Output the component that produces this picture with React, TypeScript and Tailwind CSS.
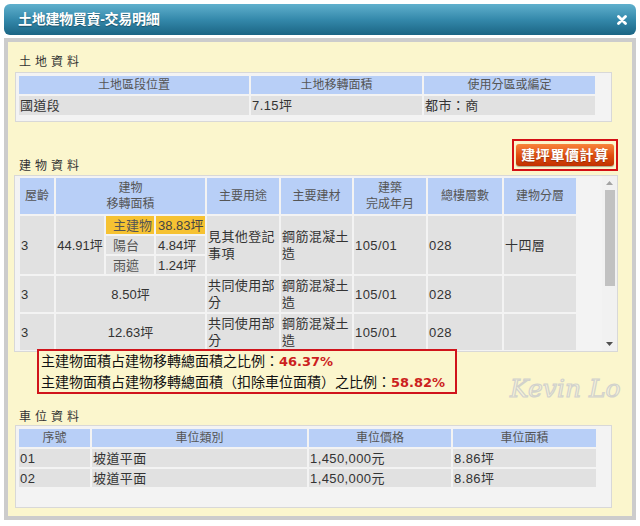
import React from 'react';

const headCell = 'bg-[#b8cff7] text-[#555] text-[12px] font-normal text-center align-middle p-0 leading-[16px]';
const cellBase = 'bg-[#e1e1e1] text-[#333] text-[13px] align-middle p-0 leading-[17px]';
const dataCell = `${cellBase} text-left pl-[1px] tracking-[0.4px]`;
const numCell = `${cellBase} text-center whitespace-nowrap`;
const subCell = 'text-[13px] text-left align-middle p-0 leading-[17px] whitespace-nowrap';

function SectionLabel({ text }: { text: string }) {
  return <div className="pl-[5px] h-[16px] leading-[16px] text-[12px] tracking-[4px] text-[#333]">{text}</div>;
}

function BuildingRow({ area }: { area: string }) {
  return (
    <tr className="h-[36px]">
      <td className={dataCell}>3</td>
      <td colSpan={3} className={numCell}>{area}</td>
      <td className={dataCell}>共同使用部分</td>
      <td className={dataCell}>鋼筋混凝土造</td>
      <td className={dataCell}>105/01</td>
      <td className={dataCell}>028</td>
      <td className={dataCell}></td>
    </tr>
  );
}

export default function App(): JSX.Element {
  return (
    <div className="w-[640px] h-[526px] overflow-hidden bg-white pt-[4px] px-[4px] font-['Liberation_Sans','Noto_Sans_CJK_TC',sans-serif]">
      {/* title bar */}
      <div className="h-[31px] rounded-[6px] bg-gradient-to-b from-[#5fb0cd] via-[#3489ab] to-[#1b6584] flex items-center justify-between pl-[14px] pr-[9px]">
        <span className="text-[14px] font-bold text-white tracking-[-0.3px] [text-shadow:0_1px_1px_rgba(0,0,0,0.35)]">
          土地建物買賣-交易明細
        </span>
        <svg width="10" height="10" viewBox="0 0 10 10">
          <path d="M1.5 1.5 L8.5 8.5 M8.5 1.5 L1.5 8.5" stroke="#fff" strokeWidth="2.8" strokeLinecap="round" />
        </svg>
      </div>

      {/* body frame */}
      <div className="relative mt-[3px] h-[482px] border-[4px] border-[#cccccc] bg-[#fbf6cd] pl-[6px] pr-[10px] pt-[12px]">
        <div className="absolute left-[502px] top-[332px] whitespace-nowrap text-[25px] leading-[30px] italic font-['DejaVu_Serif',serif] text-[#f6f2dc] [-webkit-text-stroke:1.2px_#d2d2cc]">
          Kevin Lo
        </div>

        <SectionLabel text="土地資料" />
        <div className="ml-[1px] mt-[2px] w-[597px] h-[50px] border border-[#d8d8d8] bg-[#f3f3f3] p-[1px]">
          <table className="table-fixed border-separate border-spacing-[2px] w-[579px]">
            <colgroup>
              <col className="w-[230px]" />
              <col className="w-[171px]" />
              <col className="w-[171px]" />
            </colgroup>
            <thead>
              <tr className="h-[18px]">
                <th className={headCell}>土地區段位置</th>
                <th className={headCell}>土地移轉面積</th>
                <th className={headCell}>使用分區或編定</th>
              </tr>
            </thead>
            <tbody>
              <tr className="h-[19px]">
                <td className={dataCell}>國道段</td>
                <td className={dataCell}>7.15坪</td>
                <td className={dataCell}>都市：商</td>
              </tr>
            </tbody>
          </table>
        </div>

        <div className="mt-[19px] h-[30px] flex items-end justify-between">
          <div className="-mb-[3px]">
            <SectionLabel text="建物資料" />
          </div>
          <div className="mr-[4px] border-2 border-[#d40f14] p-[2px]">
            <button className="w-[98px] h-[22px] rounded-[3px] bg-gradient-to-b from-[#f8843a] via-[#e24f10] to-[#c23000] text-white font-bold text-[14px] leading-[22px] tracking-[0.6px] shadow-[0_1px_1px_rgba(0,0,0,0.3)] [text-shadow:0_1px_1px_rgba(0,0,0,0.3)]">
              建坪單價計算
            </button>
          </div>
        </div>

        {/* building table with scrollbar */}
        <div className="mt-[4px] w-[604px] h-[177px] border border-[#d8d8d8] bg-[#f3f3f3] flex">
          <div className="flex-1 overflow-hidden pl-[3px]">
            <table className="table-fixed border-separate border-spacing-[2px] w-[560px]">
              <colgroup>
                <col className="w-[34px]" />
                <col className="w-[48px]" />
                <col className="w-[48px]" />
                <col className="w-[49px]" />
                <col className="w-[72px]" />
                <col className="w-[71px]" />
                <col className="w-[72px]" />
                <col className="w-[74px]" />
                <col className="w-[72px]" />
              </colgroup>
              <thead>
                <tr className="h-[36px]">
                  <th className={headCell}>屋齡</th>
                  <th colSpan={3} className={headCell}>
                    建物
                    <br />
                    移轉面積
                  </th>
                  <th className={headCell}>主要用途</th>
                  <th className={headCell}>主要建材</th>
                  <th className={headCell}>
                    建築
                    <br />
                    完成年月
                  </th>
                  <th className={headCell}>總樓層數</th>
                  <th className={headCell}>建物分層</th>
                </tr>
              </thead>
              <tbody>
                <tr className="h-[18px]">
                  <td rowSpan={3} className={dataCell}>3</td>
                  <td rowSpan={3} className={numCell}>44.91坪</td>
                  <td className={`${subCell} bg-[#f6c232] text-[#555] pl-[7px]`}>主建物</td>
                  <td className={`${subCell} bg-[#f6c232] text-[#444] pl-[2px]`}>38.83坪</td>
                  <td rowSpan={3} className={dataCell}>見其他登記事項</td>
                  <td rowSpan={3} className={dataCell}>鋼筋混凝土造</td>
                  <td rowSpan={3} className={dataCell}>105/01</td>
                  <td rowSpan={3} className={dataCell}>028</td>
                  <td rowSpan={3} className={dataCell}>十四層</td>
                </tr>
                <tr className="h-[18px]">
                  <td className={`${subCell} bg-[#e1e1e1] text-[#555] pl-[7px]`}>陽台</td>
                  <td className={`${subCell} bg-[#e1e1e1] text-[#333] pl-[2px]`}>4.84坪</td>
                </tr>
                <tr className="h-[18px]">
                  <td className={`${subCell} bg-[#e1e1e1] text-[#555] pl-[7px]`}>雨遮</td>
                  <td className={`${subCell} bg-[#e1e1e1] text-[#333] pl-[2px]`}>1.24坪</td>
                </tr>
                <BuildingRow area="8.50坪" />
                <BuildingRow area="12.63坪" />
                {/* next row, scrolled out of view under the note */}
                <tr className="h-[18px]">
                  <td className={dataCell}></td>
                  <td className={dataCell}></td>
                  <td className={`${subCell} bg-[#f6c232]`}></td>
                  <td className={`${subCell} bg-[#f6c232]`}></td>
                  <td className={dataCell}></td>
                  <td className={dataCell}></td>
                  <td className={dataCell}></td>
                  <td className={dataCell}></td>
                  <td className={dataCell}></td>
                </tr>
              </tbody>
            </table>
          </div>
          <div className="w-[15px] h-full bg-[#f1f1f1] flex flex-col items-center">
            <div className="h-[14px] flex items-center justify-center">
              <svg width="7" height="4" viewBox="0 0 7 4"><path d="M3.5 0 L7 4 L0 4 Z" fill="#a3a3a3" /></svg>
            </div>
            <div className="w-[10px] h-[96px] bg-[#c1c1c1]" />
            <div className="flex-1" />
            <div className="h-[14px] flex items-center justify-center">
              <svg width="7" height="4" viewBox="0 0 7 4"><path d="M0 0 L7 0 L3.5 4 Z" fill="#505050" /></svg>
            </div>
          </div>
        </div>

        {/* ratio annotation */}
        <div className="relative z-10 -mt-[3px] ml-[23px] w-[420px] h-[45px] border-2 border-[#d0141b] bg-[#fbf6cd] pl-[2px] text-[14px] leading-[20px] text-[#111]">
          <div>
            主建物面積占建物移轉總面積之比例：
            <span className="font-['DejaVu_Sans',sans-serif] font-bold text-[13px] text-[#cc1f1f]">46.37%</span>
          </div>
          <div>
            主建物面積占建物移轉總面積（扣除車位面積）之比例：
            <span className="font-['DejaVu_Sans',sans-serif] font-bold text-[13px] text-[#cc1f1f]">58.82%</span>
          </div>
        </div>

        <div className="mt-[15px]">
          <SectionLabel text="車位資料" />
        </div>
        <div className="ml-[1px] w-[597px] h-[83px] border border-[#d8d8d8] bg-[#f3f3f3] p-[1px]">
          <table className="table-fixed border-separate border-spacing-[2px] w-[581px]">
            <colgroup>
              <col className="w-[71px]" />
              <col className="w-[215px]" />
              <col className="w-[142px]" />
              <col className="w-[143px]" />
            </colgroup>
            <thead>
              <tr className="h-[18px]">
                <th className={headCell}>序號</th>
                <th className={headCell}>車位類別</th>
                <th className={headCell}>車位價格</th>
                <th className={headCell}>車位面積</th>
              </tr>
            </thead>
            <tbody>
              <tr className="h-[18px]">
                <td className={dataCell}>01</td>
                <td className={dataCell}>坡道平面</td>
                <td className={dataCell}>1,450,000元</td>
                <td className={dataCell}>8.86坪</td>
              </tr>
              <tr className="h-[18px]">
                <td className={dataCell}>02</td>
                <td className={dataCell}>坡道平面</td>
                <td className={dataCell}>1,450,000元</td>
                <td className={dataCell}>8.86坪</td>
              </tr>
            </tbody>
          </table>
        </div>
      </div>
    </div>
  );
}
